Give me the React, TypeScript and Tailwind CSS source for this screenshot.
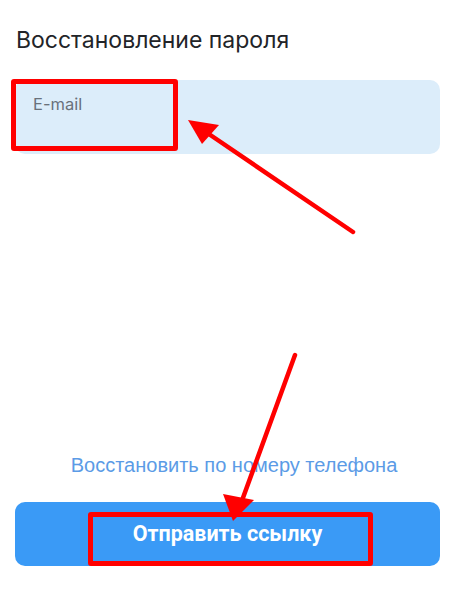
import React from "react";

export default function App() {
  return (
    <div className="relative w-[468px] h-[596px] bg-white overflow-hidden">
      <div className="flex flex-col px-[15px] pt-[26px]">
        <h1 className="pl-[1px] text-[23px] leading-[28px] text-[#222428] font-['Inter',sans-serif]">
          Восстановление пароля
        </h1>

        <div className="relative mt-[26px] h-[74px] w-[425px] rounded-[10px] bg-[#dcedfa]">
          <input
            type="email"
            placeholder="E-mail"
            className="w-full bg-transparent pl-[18px] pt-[14px] text-[16.5px] leading-[20px] text-[#333] placeholder-[#69717a] font-['Inter',sans-serif] outline-none"
          />
          <div className="absolute left-[-4px] top-[-1px] w-[167px] h-[72px] rounded-[3px] border-[5px] border-[#ff0000]" />
        </div>

        <a
          href="#"
          className="mt-[299px] text-center text-[20px] leading-[24px] text-[#5b9be6] font-['Liberation_Sans',sans-serif]"
        >
          Восстановить по номеру телефона
        </a>

        <button className="relative mt-[25px] h-[64px] w-[425px] rounded-[10px] bg-[#3a9af6] text-white text-[21.5px] font-bold font-['Roboto',sans-serif]">
          Отправить ссылку
          <span className="absolute left-[73px] top-[10px] w-[285px] h-[54px] rounded-[3px] border-[5px] border-[#ff0000]" />
        </button>
      </div>

      <svg
        className="absolute inset-0 pointer-events-none"
        width="468"
        height="596"
        viewBox="0 0 468 596"
      >
        <line x1="353" y1="232" x2="200" y2="128" stroke="#ff0000" strokeWidth="4.5" strokeLinecap="round" />
        <polygon points="188,120 219,125 202,144" fill="#ff0000" />
        <line x1="295" y1="355" x2="240" y2="506" stroke="#ff0000" strokeWidth="4.5" strokeLinecap="round" />
        <polygon points="233,521 223,494 254,500" fill="#ff0000" />
      </svg>
    </div>
  );
}
